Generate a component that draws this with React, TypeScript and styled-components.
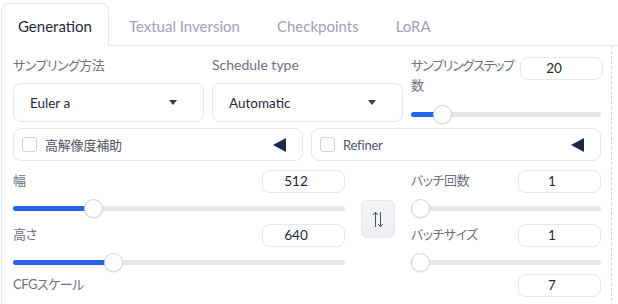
import React from "react";
import styled, { createGlobalStyle } from "styled-components";

const GlobalStyle = createGlobalStyle`
  html, body {
    margin: 0;
    padding: 0;
    background: #ffffff;
    overflow: hidden;
  }
  body {
    font-family: Lato, "Noto Sans CJK JP", sans-serif;
    font-feature-settings: "palt";
    color: #1f2937;
  }
`;

const Root = styled.div`
  width: 618px;
`;

const TabBar = styled.div`
  display: flex;
  gap: 3px;
  padding: 3px 0 0 1px;
  height: 42px;
  border-bottom: 1px solid #e5e7eb;
`;

const Tab = styled.div<{ $active?: boolean }>`
  height: 43px;
  box-sizing: border-box;
  padding: 12px 16px 0;
  font-size: 15px;
  line-height: 20px;
  color: ${(p) => (p.$active ? "#1f2937" : "#9ca3af")};
  background: ${(p) => (p.$active ? "#ffffff" : "transparent")};
  border: 1px solid ${(p) => (p.$active ? "#e5e7eb" : "transparent")};
  border-bottom: none;
  border-radius: 8px 8px 0 0;
  margin-bottom: -1px;
`;

const Panel = styled.div`
  margin-left: 1px;
  width: 611px;
  box-sizing: border-box;
  border-left: 1px solid #e5e7eb;
  border-right: 1px dashed #d1d5db;
  padding: 9px 10px 0 11px;
  height: 260px;
`;

const TopRow = styled.div`
  display: grid;
  grid-template-columns: 191px 191px 190px;
  column-gap: 8px;
  align-items: start;
`;

const Field = styled.div`
  display: flex;
  flex-direction: column;
`;

const Label = styled.div<{ $latin?: boolean; $tight?: boolean }>`
  font-size: ${(p) => (p.$latin ? 14 : 13)}px;
  letter-spacing: ${(p) => (p.$latin ? 0 : p.$tight ? -1.2 : -0.5)}px;
  line-height: 20px;
  color: #6b7280;
  white-space: ${(p) => (p.$tight ? "nowrap" : "normal")};
`;

const Dropdown = styled.div`
  margin-top: 8px;
  height: 39px;
  box-sizing: border-box;
  border: 1px solid #e5e7eb;
  border-radius: 8px;
  display: flex;
  align-items: center;
  justify-content: space-between;
  padding: 0 26px 0 16px;
  font-size: 13.5px;
  color: #1f2937;
`;

const DownArrow = styled.span`
  width: 0;
  height: 0;
  border-left: 4px solid transparent;
  border-right: 4px solid transparent;
  border-top: 5px solid #374151;
`;

const FieldHead = styled.div`
  display: flex;
  align-items: flex-start;
  gap: 6px;
  min-height: 24px;
`;

const HeadLabel = styled(Label)`
  flex: 1;
`;

const NumberBox = styled.div<{ $offset?: number }>`
  flex: none;
  width: 83px;
  height: 23px;
  margin-top: ${(p) => p.$offset ?? 0}px;
  box-sizing: border-box;
  border: 1px solid #e5e7eb;
  border-radius: 8px;
  padding-right: 15px;
  text-align: center;
  font-size: 13.5px;
  line-height: 21px;
  color: #1f2937;
  background: #ffffff;
`;

const Track = styled.div<{ $gap: number }>`
  position: relative;
  margin-top: ${(p) => p.$gap}px;
  height: 20px;
  &::before {
    content: "";
    position: absolute;
    left: 0;
    right: 0;
    top: 8px;
    height: 5px;
    border-radius: 3px;
    background: #e5e7eb;
  }
`;

const Fill = styled.div`
  position: absolute;
  left: 0;
  top: 8px;
  height: 5px;
  border-radius: 3px;
  background: #2563eb;
`;

const Thumb = styled.div`
  position: absolute;
  top: 1px;
  width: 19px;
  height: 19px;
  box-sizing: border-box;
  margin-left: -9.5px;
  border-radius: 50%;
  background: #ffffff;
  border: 1px solid #d1d5db;
  box-shadow: 0 1px 2px rgba(0, 0, 0, 0.08);
`;

const AccordionRow = styled.div`
  display: grid;
  grid-template-columns: 1fr 1fr;
  column-gap: 8px;
  margin-top: 4px;
`;

const Accordion = styled.div`
  height: 33px;
  box-sizing: border-box;
  border: 1px solid #e5e7eb;
  border-radius: 8px;
  display: flex;
  align-items: center;
  padding: 0 16px 0 8px;
  gap: 8px;
  font-size: 13px;
  letter-spacing: -0.2px;
  color: #4b5563;
`;

const Checkbox = styled.span`
  width: 15px;
  height: 15px;
  box-sizing: border-box;
  border: 1px solid #d1d5db;
  border-radius: 3px;
  background: #ffffff;
`;

const AccordionTitle = styled.span`
  flex: 1;
`;

const LeftArrow = styled.span`
  width: 0;
  height: 0;
  border-top: 7px solid transparent;
  border-bottom: 7px solid transparent;
  border-right: 13px solid #1e2a47;
`;

const DimRow = styled.div`
  display: grid;
  grid-template-columns: 1fr 34px 190px;
  column-gap: 16px;
  margin-top: 9px;
`;

const Column = styled.div`
  display: flex;
  flex-direction: column;
  gap: 6px;
`;

const SwapButton = styled.div`
  align-self: center;
  height: 38px;
  margin-top: -4px;
  box-sizing: border-box;
  border: 1px solid #e5e7eb;
  border-radius: 6px;
  background: linear-gradient(#f3f4f6, #eceef1);
  display: flex;
  align-items: center;
  justify-content: center;
`;

const CfgRow = styled(FieldHead)`
  margin-top: 2px;
`;

const SwapIcon = () => (
  <svg width="12" height="17" viewBox="0 0 12 17" fill="none" stroke="#4b5563" strokeWidth="1">
    <path d="M3.5 16V1.5M1.2 4L3.5 1.2L5.8 4" />
    <path d="M8.5 1V15.5M6.2 13L8.5 15.8L10.8 13" />
  </svg>
);

type SliderProps = {
  label: React.ReactNode;
  value: number;
  min: number;
  max: number;
  gap?: number;
  inputOffset?: number;
  tight?: boolean;
};

const SliderField: React.FC<SliderProps> = ({ label, value, min, max, gap = 4, inputOffset = 0, tight }) => {
  const pct = (value - min) / (max - min);
  const pos = `calc(9.5px + (100% - 19px) * ${pct})`;
  return (
    <Field>
      <FieldHead>
        <HeadLabel $tight={tight}>{label}</HeadLabel>
        <NumberBox $offset={inputOffset}>{value}</NumberBox>
      </FieldHead>
      <Track $gap={gap}>
        <Fill style={{ width: pos }} />
        <Thumb style={{ left: pos }} />
      </Track>
    </Field>
  );
};

export default function App() {
  return (
    <Root>
      <GlobalStyle />
      <TabBar>
        <Tab $active>Generation</Tab>
        <Tab>Textual Inversion</Tab>
        <Tab>Checkpoints</Tab>
        <Tab>LoRA</Tab>
      </TabBar>
      <Panel>
        <TopRow>
          <Field>
            <Label>サンプリング方法</Label>
            <Dropdown>
              Euler a
              <DownArrow />
            </Dropdown>
          </Field>
          <Field>
            <Label $latin>Schedule type</Label>
            <Dropdown>
              Automatic
              <DownArrow />
            </Dropdown>
          </Field>
          <SliderField
            label={
              <>
                サンプリングステップ
                <br />数
              </>
            }
            tight
            value={20}
            min={1}
            max={150}
            gap={9}
            inputOffset={2}
          />
        </TopRow>
        <AccordionRow>
          <Accordion>
            <Checkbox />
            <AccordionTitle>高解像度補助</AccordionTitle>
            <LeftArrow />
          </Accordion>
          <Accordion>
            <Checkbox />
            <AccordionTitle>Refiner</AccordionTitle>
            <LeftArrow />
          </Accordion>
        </AccordionRow>
        <DimRow>
          <Column>
            <SliderField label="幅" value={512} min={64} max={2048} />
            <SliderField label="高さ" value={640} min={64} max={2048} />
          </Column>
          <SwapButton>
            <SwapIcon />
          </SwapButton>
          <Column>
            <SliderField label="バッチ回数" value={1} min={1} max={100} />
            <SliderField label="バッチサイズ" value={1} min={1} max={8} />
          </Column>
        </DimRow>
        <CfgRow>
          <HeadLabel>CFGスケール</HeadLabel>
          <NumberBox>7</NumberBox>
        </CfgRow>
      </Panel>
    </Root>
  );
}
